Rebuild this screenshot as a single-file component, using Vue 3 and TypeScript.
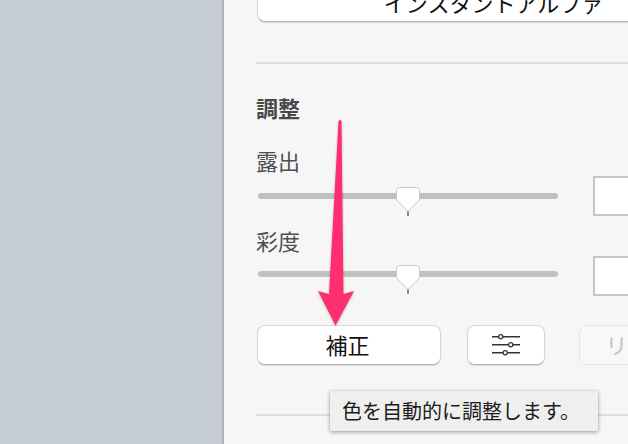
<script setup lang="ts">
const sliders: { label: string; trackTop: number }[] = [
  { label: '露出', trackTop: 17 },
  { label: '彩度', trackTop: 15 },
]
</script>

<template>
  <div class="window">
    <aside class="sidebar"></aside>
    <main class="panel">
      <button class="btn wide-top">インスタントアルファ</button>
      <hr class="rule first" />
      <h2 class="heading">調整</h2>
      <div v-for="s in sliders" :key="s.label" class="adjust">
        <div class="label">{{ s.label }}</div>
        <div class="slider-row">
          <div class="slider" :style="{ marginTop: s.trackTop + 'px' }">
            <svg class="thumb" width="26" height="32" viewBox="0 0 26 32">
              <path d="M12 25h2v5h-2z" fill="#8a8a8a" />
              <path d="M4.500 1.500h17a3 3 0 0 1 3 3v9.500L13 25.500 1.500 14V4.500a3 3 0 0 1 3-3z" fill="#fff" stroke="#c8c8c8" stroke-width="1" />
            </svg>
          </div>
          <div class="field"></div>
        </div>
      </div>
      <div class="actions">
        <button class="btn fix">補正</button>
        <button class="btn icon-btn" aria-label="設定">
          <svg width="30" height="24" viewBox="0 0 30 24" fill="none">
            <path d="M1 3.700h6.500M12 3.700h17M1 11.700h16.500M22 11.700h7M1 19.700h11M16.500 19.700h12.500" stroke="#333" stroke-width="1.600" />
            <circle cx="9.700" cy="3.700" r="2.100" stroke="#333" stroke-width="1.300" />
            <circle cx="19.700" cy="11.700" r="2.100" stroke="#333" stroke-width="1.300" />
            <circle cx="14.200" cy="19.700" r="2.100" stroke="#333" stroke-width="1.300" />
          </svg>
        </button>
        <button class="btn reset" disabled>リセット</button>
      </div>
      <hr class="rule last" />
    </main>
    <div class="tooltip">色を自動的に調整します。</div>
    <svg class="arrow" width="628" height="444" viewBox="0 0 628 444">
      <defs>
        <filter id="arrow-shadow" x="-30%" y="-5%" width="160%" height="110%">
          <feDropShadow dx="0" dy="1" stdDeviation="1" flood-color="#000" flood-opacity="0.3" />
        </filter>
      </defs>
      <path d="M338.500 121.500a1.500 1.500 0 0 1 3 0L343.500 294 354 291 335.500 325.500 318 291 329 294z" fill="#ff2d6e" filter="url(#arrow-shadow)" />
    </svg>
  </div>
</template>

<style>
html, body { margin: 0; padding: 0; }
</style>

<style scoped>
.window {
  position: relative;
  display: flex;
  width: 628px;
  height: 444px;
  overflow: hidden;
  background: #f6f6f6;
  font-family: "Noto Sans CJK JP", "Liberation Sans", sans-serif;
  color: #4a4a4a;
}
.sidebar {
  flex: 0 0 222px;
  background: #c5ccd4;
  border-right: 2px solid #aeb3b9;
}
.panel {
  flex: 0 0 472px;
  margin-left: 32px;
  margin-top: -18px;
  display: flex;
  flex-direction: column;
}
.btn {
  box-sizing: border-box;
  height: 40px;
  padding: 0 3px 3px 0;
  border: 1px solid #d6d6d6;
  border-bottom-color: #b4b4b4;
  border-radius: 8px;
  background: #fff;
  box-shadow: 0 1px 1px rgba(0, 0, 0, 0.12);
  font-family: inherit;
  font-size: 22px;
  line-height: 1;
  color: #111;
}
.wide-top { width: 472px; margin-left: 1px; padding: 0 0 0 1px; }
.rule {
  border: 0;
  height: 2px;
  margin: 0;
  background: #dedede;
}
.rule.first { margin-top: 40px; }
.heading {
  margin: 27px 0 0 0;
  font-size: 22px;
  line-height: 32px;
  font-weight: 700;
  color: #484848;
}
.adjust { display: flex; flex-direction: column; }
.label {
  font-size: 22px;
  line-height: 30px;
  color: #4f4f4f;
}
.heading + .adjust { margin-top: 22px; }
.adjust + .adjust { margin-top: 9px; }
.slider-row {
  display: flex;
  align-items: flex-start;
  height: 40px;
  margin-left: 2px;
  margin-top: 1px;
}
.slider {
  position: relative;
  flex: 0 0 300px;
  height: 6px;
  border-radius: 3px;
  background: #c0c0c0;
}
.thumb {
  position: absolute;
  left: 137px;
  top: -7px;
}
.field {
  box-sizing: border-box;
  flex: 0 0 80px;
  height: 40px;
  margin-left: 35px;
  border: 2px solid #c6c6c6;
  background: #fff;
}
.actions {
  display: flex;
  margin-top: 29px;
  margin-left: 1px;
}
.fix { flex: 0 0 184px; }
.icon-btn {
  flex: 0 0 78px;
  margin-left: 26px;
  padding: 0;
  display: flex;
  align-items: center;
  justify-content: center;
}
.reset {
  flex: 0 0 144px;
  margin-left: 34px;
  border-color: #e6e6e6;
  box-shadow: none;
  background: #f8f8f8;
  color: #c4c4c4;
}
.rule.last { margin-top: 49px; }
.tooltip {
  position: absolute;
  left: 330px;
  top: 391px;
  box-sizing: border-box;
  width: 268px;
  height: 40px;
  padding-left: 12px;
  background: #efefef;
  box-shadow: 0 1px 4px rgba(0, 0, 0, 0.4);
  font-size: 20px;
  line-height: 40px;
  color: #1c1c1c;
  white-space: nowrap;
}
.arrow {
  position: absolute;
  left: 0;
  top: 0;
  pointer-events: none;
}
</style>
